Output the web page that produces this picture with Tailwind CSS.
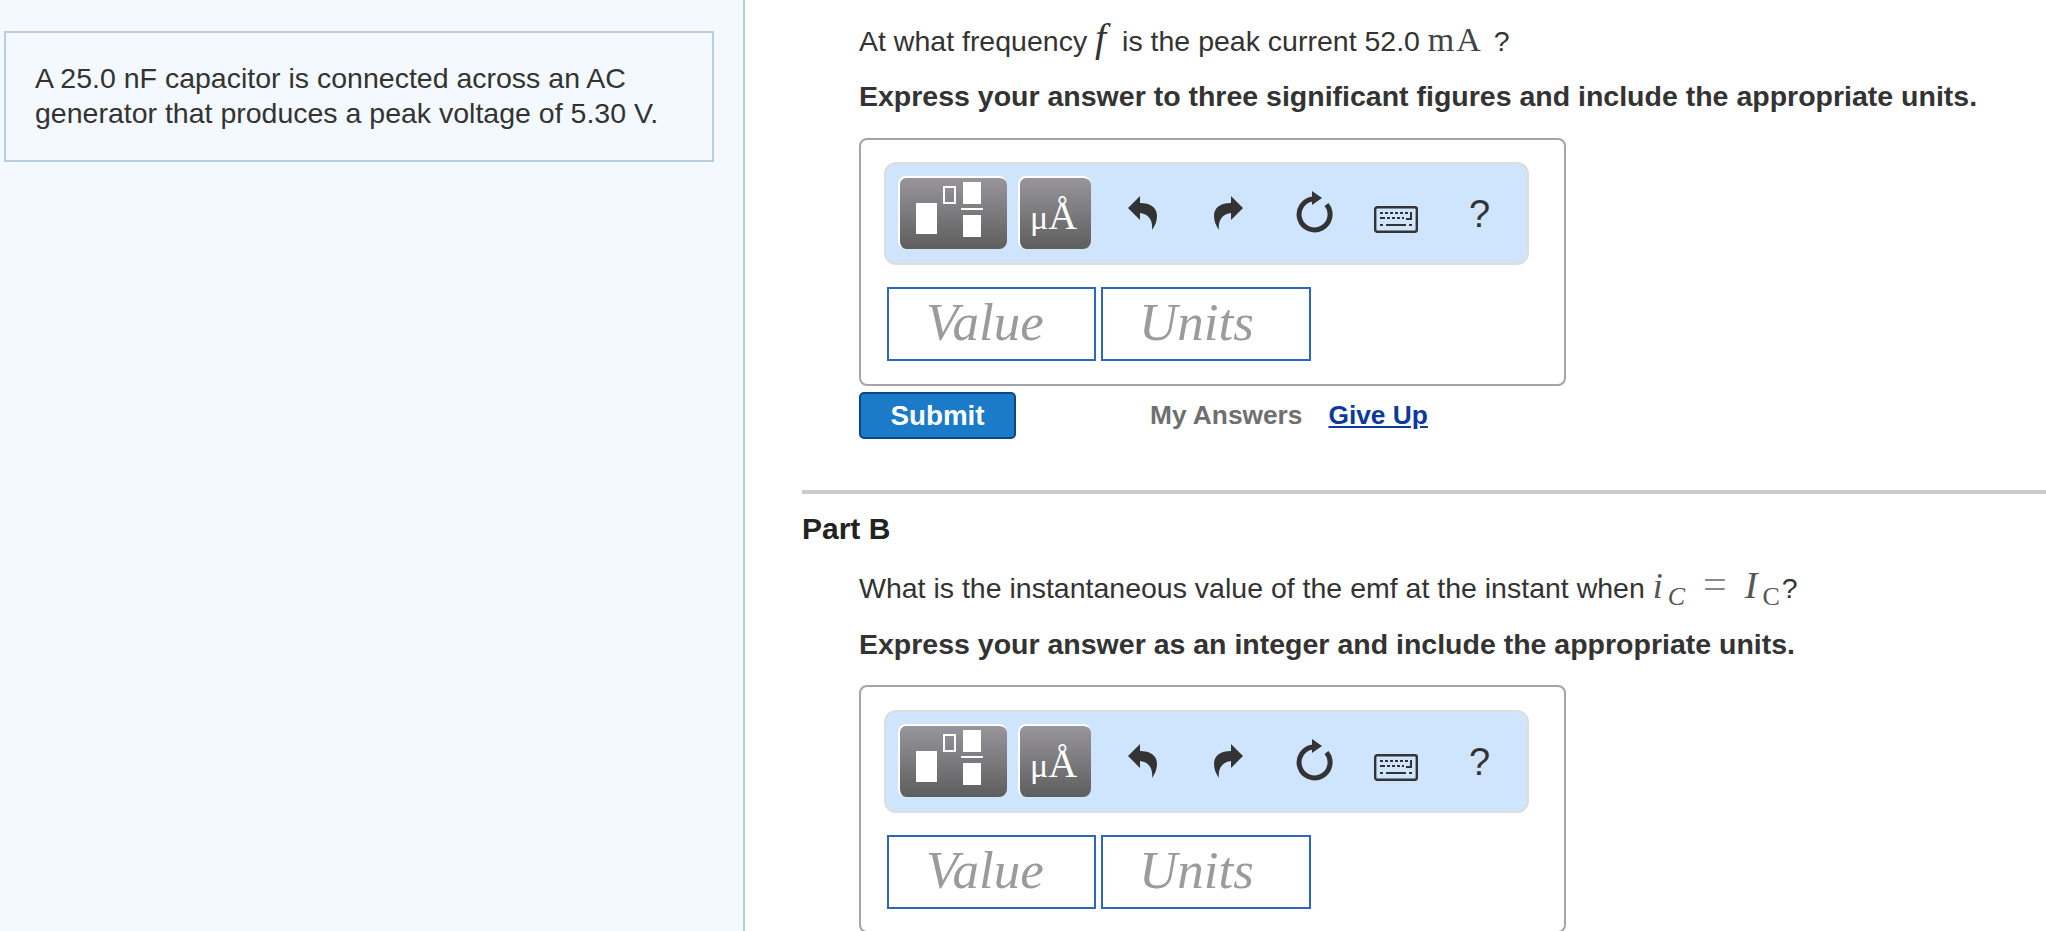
<!DOCTYPE html>
<html lang="en">
  <head>
    <meta charset="UTF-8" />
    <title>Part B</title>
    <script src="https://cdn.jsdelivr.net/npm/@tailwindcss/browser@4"></script>
  </head>
  <body class="bg-white text-[#333] font-['Liberation_Sans',Arial,sans-serif] text-[28.5px] leading-[35px]">
    <div class="flex h-[931px] overflow-hidden">
      <!-- left panel -->
      <aside class="w-[745px] shrink-0 border-r-2 border-[#b9cde0] bg-[#f4f9ff] pt-[31px] pl-1 pr-[29px]">
        <div class="h-[131px] border-2 border-[#b9cde0] pt-[28px] pl-[29px]">
          A 25.0 nF capacitor is connected across an AC<br />generator that produces a peak voltage of 5.30 V.
        </div>
      </aside>

      <!-- questions -->
      <main class="flex-1 pl-[57px]">
        <div class="pl-[57px]">
          <p class="pt-[20px]">At what frequency <span class="mr-[8px] font-['Liberation_Serif',serif] italic text-[40px] leading-[35px]">f</span> is the peak current 52.0 <span class="font-['Liberation_Serif',serif] text-[34px] tracking-[2px] text-[#444]">mA</span> <span class="ml-[3px]">?</span></p>
          <p class="mt-[20px] font-bold">Express your answer to three significant figures and include the appropriate units.</p>

          <div class="mt-[24px] h-[248px] w-[707px] rounded-lg border-2 border-[#a5a5a5] pl-[23px] pt-[22px]">
            <div class="flex h-[103px] w-[645px] items-center rounded-xl border-2 border-[#dddddd] bg-[#cfe5fe] pl-[12px]">
              <button class="mb-[2px] flex h-[73px] w-[109px] items-center justify-center rounded-lg border-t-2 border-l-2 border-white bg-linear-to-b from-[#98969c] to-[#5e5e5e] pb-[6px] pr-[8px]">
                <svg width="70" height="58" viewBox="0 0 70 58" fill="#fff">
                  <rect x="1" y="21" width="21" height="31" />
                  <rect x="29" y="5" width="11" height="16" fill="none" stroke="#fff" stroke-width="2" />
                  <rect x="48" y="0" width="18" height="22" />
                  <rect x="46" y="26" width="22" height="2" />
                  <rect x="48" y="33" width="18" height="22" />
                </svg>
              </button>
              <button class="mb-[2px] ml-[11px] h-[73px] w-[73px] rounded-lg border-t-2 border-l-2 border-white bg-linear-to-b from-[#98969c] to-[#5e5e5e] pr-[4px] pt-[5px] font-['Liberation_Serif',serif] text-[40px] leading-[66px] text-white"><span class="text-[34px]">μ</span>Å</button>

              <svg class="mb-[2px] ml-[36px]" width="32" height="36" viewBox="0 0 32 36" fill="#333">
                <path d="M1 13 L13 1 L13 8 C23 8 30 12 30 21 C30 26 28 31 25 35 C26 27 23 19 13 18 L13 25 Z" />
              </svg>
              <svg class="mb-[2px] ml-[53px]" width="32" height="36" viewBox="0 0 32 36" fill="#333">
                <path d="M31 13 L19 1 L19 8 C9 8 2 12 2 21 C2 26 4 31 7 35 C6 27 9 19 19 18 L19 25 Z" />
              </svg>
              <svg class="ml-[49px] mb-[4px]" width="40" height="42" viewBox="0 0 40 42">
                <path d="M33.5 13.5 A15.5 15.5 0 1 1 20 8" fill="none" stroke="#333" stroke-width="5" />
                <path d="M19 0 L29 7 L19 14 Z" fill="#333" />
              </svg>
              <svg class="ml-[41px] mt-[12px]" width="44" height="27" viewBox="0 0 44 27" fill="#333">
                <rect x="1.2" y="1.2" width="41.6" height="24.6" rx="2" fill="none" stroke="#333" stroke-width="2.4" />
                <path d="M6 6h3v2H6zM11 6h3v2h-3zM16 6h3v2h-3zM21 6h3v2h-3zM26 6h3v2h-3zM31 6h3v2h-3zM36 6h2v8h-6v-2h4z" />
                <path d="M6 11h5v2H6zM13 11h3v2h-3zM18 11h3v2h-3zM23 11h3v2h-3zM28 11h2v2h-2z" />
                <path d="M6 18h3v2H6zM12 18h20v2H12zM35 18h3v2h-3z" />
              </svg>
              <span class="ml-[51px] text-[38px] leading-none">?</span>
            </div>
            <div class="ml-[3px] mt-[22px] flex gap-[5px] font-['Liberation_Serif',serif] text-[53px] italic leading-[66px] text-[#9b9b9b]">
              <div class="h-[74px] w-[209px] border-2 border-[#2f65c8] pl-[37px]">Value</div>
              <div class="h-[74px] w-[210px] border-2 border-[#2f65c8] pl-[36px]">Units</div>
            </div>
          </div>

          <div class="mt-[6px] flex items-center">
            <button class="h-[47px] w-[157px] rounded-[5px] border-2 border-[#0b4a80] bg-[#1c7bc9] text-[27.8px] font-bold text-white">Submit</button>
            <span class="ml-[134px] text-[26.3px] font-bold text-[#6f6f6f]">My Answers</span>
            <a class="ml-[26px] text-[26.3px] font-bold text-[#0a3a9e] underline">Give Up</a>
          </div>
        </div>

        <hr class="mt-[51px] h-1 border-0 bg-[#cccccc]" />
        <h2 class="mt-[17px] text-[30px] font-bold text-[#222]">Part B</h2>

        <div class="pl-[57px]">
          <p class="mt-[21px]">What is the instantaneous value of the emf at the instant when <span class="font-['Liberation_Serif',serif] text-[#555]"><i class="text-[36px]">i</i><sub class="ml-[5px] text-[26px] italic">C</sub><span class="mx-[18px] text-[42px] font-light text-[#888]">=</span><i class="text-[38px]">I</i><sub class="ml-[5px] mr-[2px] text-[26px]">C</sub></span>?</p>
          <p class="mt-[21px] font-bold">Express your answer as an integer and include the appropriate units.</p>

          <div class="mt-[23px] h-[248px] w-[707px] rounded-lg border-2 border-[#a5a5a5] pl-[23px] pt-[23px]">
            <div class="flex h-[103px] w-[645px] items-center rounded-xl border-2 border-[#dddddd] bg-[#cfe5fe] pl-[12px]">
              <button class="mb-[2px] flex h-[73px] w-[109px] items-center justify-center rounded-lg border-t-2 border-l-2 border-white bg-linear-to-b from-[#98969c] to-[#5e5e5e] pb-[6px] pr-[8px]">
                <svg width="70" height="58" viewBox="0 0 70 58" fill="#fff">
                  <rect x="1" y="21" width="21" height="31" />
                  <rect x="29" y="5" width="11" height="16" fill="none" stroke="#fff" stroke-width="2" />
                  <rect x="48" y="0" width="18" height="22" />
                  <rect x="46" y="26" width="22" height="2" />
                  <rect x="48" y="33" width="18" height="22" />
                </svg>
              </button>
              <button class="mb-[2px] ml-[11px] h-[73px] w-[73px] rounded-lg border-t-2 border-l-2 border-white bg-linear-to-b from-[#98969c] to-[#5e5e5e] pr-[4px] pt-[5px] font-['Liberation_Serif',serif] text-[40px] leading-[66px] text-white"><span class="text-[34px]">μ</span>Å</button>

              <svg class="mb-[2px] ml-[36px]" width="32" height="36" viewBox="0 0 32 36" fill="#333">
                <path d="M1 13 L13 1 L13 8 C23 8 30 12 30 21 C30 26 28 31 25 35 C26 27 23 19 13 18 L13 25 Z" />
              </svg>
              <svg class="mb-[2px] ml-[53px]" width="32" height="36" viewBox="0 0 32 36" fill="#333">
                <path d="M31 13 L19 1 L19 8 C9 8 2 12 2 21 C2 26 4 31 7 35 C6 27 9 19 19 18 L19 25 Z" />
              </svg>
              <svg class="ml-[49px] mb-[4px]" width="40" height="42" viewBox="0 0 40 42">
                <path d="M33.5 13.5 A15.5 15.5 0 1 1 20 8" fill="none" stroke="#333" stroke-width="5" />
                <path d="M19 0 L29 7 L19 14 Z" fill="#333" />
              </svg>
              <svg class="ml-[41px] mt-[12px]" width="44" height="27" viewBox="0 0 44 27" fill="#333">
                <rect x="1.2" y="1.2" width="41.6" height="24.6" rx="2" fill="none" stroke="#333" stroke-width="2.4" />
                <path d="M6 6h3v2H6zM11 6h3v2h-3zM16 6h3v2h-3zM21 6h3v2h-3zM26 6h3v2h-3zM31 6h3v2h-3zM36 6h2v8h-6v-2h4z" />
                <path d="M6 11h5v2H6zM13 11h3v2h-3zM18 11h3v2h-3zM23 11h3v2h-3zM28 11h2v2h-2z" />
                <path d="M6 18h3v2H6zM12 18h20v2H12zM35 18h3v2h-3z" />
              </svg>
              <span class="ml-[51px] text-[38px] leading-none">?</span>
            </div>
            <div class="ml-[3px] mt-[22px] flex gap-[5px] font-['Liberation_Serif',serif] text-[53px] italic leading-[66px] text-[#9b9b9b]">
              <div class="h-[74px] w-[209px] border-2 border-[#2f65c8] pl-[37px]">Value</div>
              <div class="h-[74px] w-[210px] border-2 border-[#2f65c8] pl-[36px]">Units</div>
            </div>
          </div>
        </div>
      </main>
    </div>
  </body>
</html>
